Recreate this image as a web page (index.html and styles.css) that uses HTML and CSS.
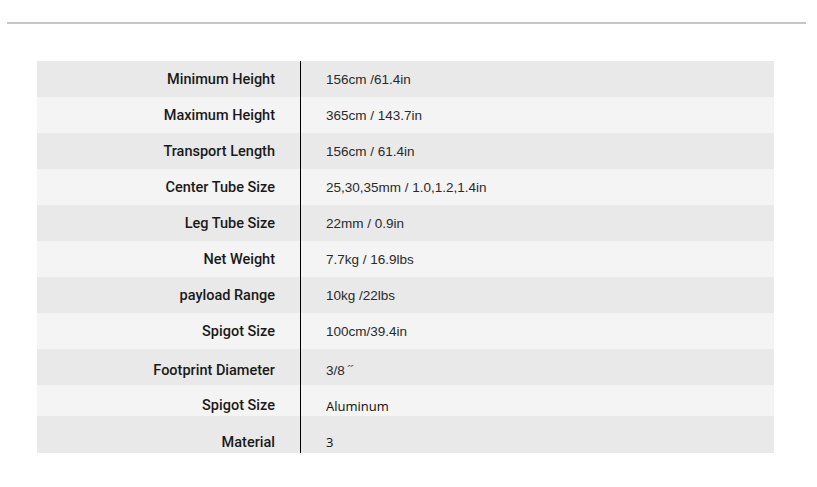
FILE: index.html
```html
<!DOCTYPE html>
<html>
<head>
<meta charset="utf-8">
<link rel="stylesheet" href="styles.css">
</head>
<body>
<div class="rule"></div>
<div class="specs">
  <div class="row dark"><div class="label">Minimum Height</div><div class="value">156cm /61.4in</div></div>
  <div class="row light"><div class="label">Maximum Height</div><div class="value">365cm / 143.7in</div></div>
  <div class="row dark"><div class="label">Transport Length</div><div class="value">156cm / 61.4in</div></div>
  <div class="row light"><div class="label">Center Tube Size</div><div class="value">25,30,35mm / 1.0,1.2,1.4in</div></div>
  <div class="row dark"><div class="label">Leg Tube Size</div><div class="value">22mm / 0.9in</div></div>
  <div class="row light"><div class="label">Net Weight</div><div class="value">7.7kg / 16.9lbs</div></div>
  <div class="row dark"><div class="label">payload Range</div><div class="value">10kg /22lbs</div></div>
  <div class="row light"><div class="label">Spigot Size</div><div class="value">100cm/39.4in</div></div>
  <div class="row dark shift-1"><div class="label">Footprint Diameter</div><div class="value">3/8 <span class="prime">´´</span></div></div>
  <div class="row light short shift-2"><div class="label">Spigot Size</div><div class="value alt">Aluminum</div></div>
  <div class="row dark tall shift-3"><div class="label">Material</div><div class="value alt">3</div></div>
</div>
</body>
</html>
```
FILE: styles.css
```css
html, body {
  margin: 0;
  padding: 0;
  background: #ffffff;
}

body {
  font-family: "Liberation Sans", Arial, sans-serif;
}

.rule {
  height: 2px;
  margin: 22px 11px 0 7px;
  background: #c4c4c4;
}

.specs {
  margin: 37px 0 0 37px;
  width: 737px;
  display: flex;
  flex-direction: column;
}

.row {
  display: flex;
  height: 36px;
  box-sizing: border-box;
}

.row.dark { background: #e9e9e9; }
.row.light { background: #f4f4f4; }
.row.short { height: 31px; }
.row.tall { height: 37px; }

.row.shift-1 { padding-top: 6px; }
.row.shift-2 { padding-top: 10px; }
.row.shift-3 { padding-top: 15px; }

.label {
  width: 264px;
  flex: none;
  box-sizing: border-box;
  padding-right: 25px;
  display: flex;
  align-items: center;
  justify-content: flex-end;
  font-family: Roboto, "Liberation Sans", sans-serif;
  font-size: 14.5px;
  font-weight: 500;
  color: #1a1a1a;
  border-right: 1px solid #000;
}

.row.shift-1 .label { margin-top: -6px; padding-top: 6px; }
.row.shift-2 .label { margin-top: -10px; padding-top: 10px; }
.row.shift-3 .label { margin-top: -15px; padding-top: 15px; }

.value {
  flex: 1;
  padding-left: 25px;
  display: flex;
  align-items: center;
  font-size: 13.5px;
  color: #2a2a2a;
}

.value.alt {
  font-family: "Open Sans", "Noto Sans", sans-serif;
  font-size: 13px;
  color: #111;
}

.prime {
  font-family: "Liberation Sans", sans-serif;
  font-size: 15px;
  color: #555;
  margin-left: 2px;
  letter-spacing: -2px;
  position: relative;
  top: 0;
}
```
